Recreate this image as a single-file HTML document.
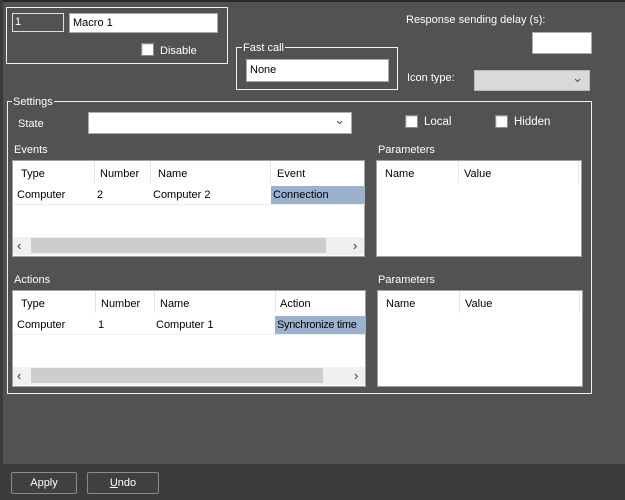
<!DOCTYPE html>
<html><head><meta charset="utf-8"><style>
*{margin:0;padding:0;box-sizing:border-box}
body{width:625px;height:500px;background:#525252;position:relative;overflow:hidden;font-family:"Liberation Sans",sans-serif;font-size:11px;color:#fff}
.a{position:absolute}
.box{position:absolute;border:1px solid #f0f0f0}
.lbl{position:absolute;background:#525252;padding:0 1px;line-height:12px}
.w{position:absolute;background:#fff;color:#000;line-height:18px;padding-left:3px;border:1px solid #a8a8a8}
.cb{position:absolute;width:13px;height:13px;background:#fff;border:1px solid #8a8a8a;box-shadow:inset 1px 1px 0 #ddd}
.t{position:absolute;background:#fff;border:1px solid #a0a0a0;color:#000}
.t .h{position:absolute;top:7px}
.t .c{position:absolute;top:28px}
.t .v{position:absolute;top:0;width:1px;height:22px;background:#e6e6e6}
.t .rl{position:absolute;left:0;top:43px;height:1px;background:#eee}
.sb{position:absolute;height:18px;background:#f0f0f0}
.th{position:absolute;top:1px;height:15px;background:#cdcdcd}
.btn{position:absolute;height:22px;border:1px solid #8a8a8a;background:#404040;border-radius:2px;text-align:center;line-height:20px}
.dd{color:#555;text-align:right;padding-right:6px;line-height:14px;font-size:13px}
</style></head><body>
<div class="a" style="left:0;top:0;width:625px;height:2px;background:#2a2a2a"></div>
<div class="a" style="left:0;top:0;width:3px;height:500px;background:#3a3a3a"></div>

<div class="box" style="left:6px;top:7px;width:222px;height:57px"></div>
<div class="a" style="left:12px;top:13px;width:52px;height:19px;border:1px solid #ddd;line-height:17px;padding-left:2px">1</div>
<div class="w" style="left:69px;top:13px;width:149px;height:20px">Macro 1</div>
<div class="cb" style="left:141px;top:43px"></div>
<div class="lbl" style="left:159px;top:45px">Disable</div>

<div class="box" style="left:236px;top:47px;width:162px;height:43px"></div>
<div class="lbl" style="left:242px;top:42px">Fast call</div>
<div class="w" style="left:246px;top:59px;width:143px;height:23px;line-height:20px">None</div>

<div class="lbl" style="left:405px;top:14px">Response sending delay (s):</div>
<div class="a" style="left:532px;top:32px;width:60px;height:22px;background:#fff;border:1px solid #aaa"></div>
<div class="lbl" style="left:406px;top:72px">Icon type:</div>
<div class="a dd" style="left:474px;top:70px;width:116px;height:21px;background:#d9d9d9;border:1px solid #bbb">&#8964;</div>

<div class="box" style="left:7px;top:101px;width:585px;height:293px"></div>
<div class="lbl" style="left:12px;top:96px">Settings</div>
<div class="lbl" style="left:17px;top:118px">State</div>
<div class="a dd" style="left:88px;top:112px;width:264px;height:22px;background:#fff;border:1px solid #aaa">&#8964;</div>
<div class="cb" style="left:405px;top:115px"></div>
<div class="lbl" style="left:423px;top:116px;font-size:11.5px">Local</div>
<div class="cb" style="left:495px;top:115px"></div>
<div class="lbl" style="left:513px;top:116px;font-size:11.5px">Hidden</div>

<div class="lbl" style="left:13px;top:144px">Events</div>
<div class="t" style="left:12px;top:160px;width:353px;height:97px">
 <div class="v" style="left:81px"></div><div class="v" style="left:137px"></div><div class="v" style="left:257px"></div>
 <div class="h" style="left:8px">Type</div><div class="h" style="left:87px">Number</div><div class="h" style="left:145px">Name</div><div class="h" style="left:264px">Event</div>
 <div class="a" style="left:258px;top:25px;width:94px;height:18px;background:#9bb2cf"></div>
 <div class="c" style="left:4px">Computer</div><div class="c" style="left:84px">2</div><div class="c" style="left:140px">Computer 2</div><div class="c" style="left:260px">Connection</div>
 <div class="rl" style="width:352px"></div>
 <div class="sb" style="left:0;top:76px;width:351px"><div class="th" style="left:18px;width:295px"></div>
 <div class="a" style="left:4px;top:1px;color:#333;font-size:13px">&#8249;</div><div class="a" style="left:340px;top:1px;color:#333;font-size:13px">&#8250;</div></div>
</div>
<div class="lbl" style="left:377px;top:144px">Parameters</div>
<div class="t" style="left:376px;top:160px;width:206px;height:97px">
 <div class="v" style="left:81px"></div><div class="v" style="left:201px"></div>
 <div class="h" style="left:8px">Name</div><div class="h" style="left:87px">Value</div>
</div>

<div class="lbl" style="left:13px;top:274px">Actions</div>
<div class="t" style="left:12px;top:290px;width:354px;height:97px">
 <div class="v" style="left:82px"></div><div class="v" style="left:141px"></div><div class="v" style="left:262px"></div>
 <div class="h" style="left:8px">Type</div><div class="h" style="left:88px">Number</div><div class="h" style="left:147px">Name</div><div class="h" style="left:267px">Action</div>
 <div class="a" style="left:262px;top:25px;width:91px;height:18px;background:#9bb2cf"></div>
 <div class="c" style="left:4px">Computer</div><div class="c" style="left:85px">1</div><div class="c" style="left:143px">Computer 1</div><div class="c" style="left:264px;letter-spacing:-0.3px">Synchronize time</div>
 <div class="rl" style="width:352px"></div>
 <div class="sb" style="left:0;top:76px;width:352px"><div class="th" style="left:18px;width:292px"></div>
 <div class="a" style="left:4px;top:1px;color:#333;font-size:13px">&#8249;</div><div class="a" style="left:341px;top:1px;color:#333;font-size:13px">&#8250;</div></div>
</div>
<div class="lbl" style="left:377px;top:274px">Parameters</div>
<div class="t" style="left:377px;top:290px;width:206px;height:97px">
 <div class="v" style="left:81px"></div><div class="v" style="left:201px"></div>
 <div class="h" style="left:8px">Name</div><div class="h" style="left:87px">Value</div>
</div>

<div class="a" style="left:0;top:464px;width:625px;height:36px;background:#3b3b3b"></div>
<div class="btn" style="left:11px;top:472px;width:66px">Apply</div>
<div class="btn" style="left:87px;top:472px;width:72px"><u>U</u>ndo</div>
</body></html>
